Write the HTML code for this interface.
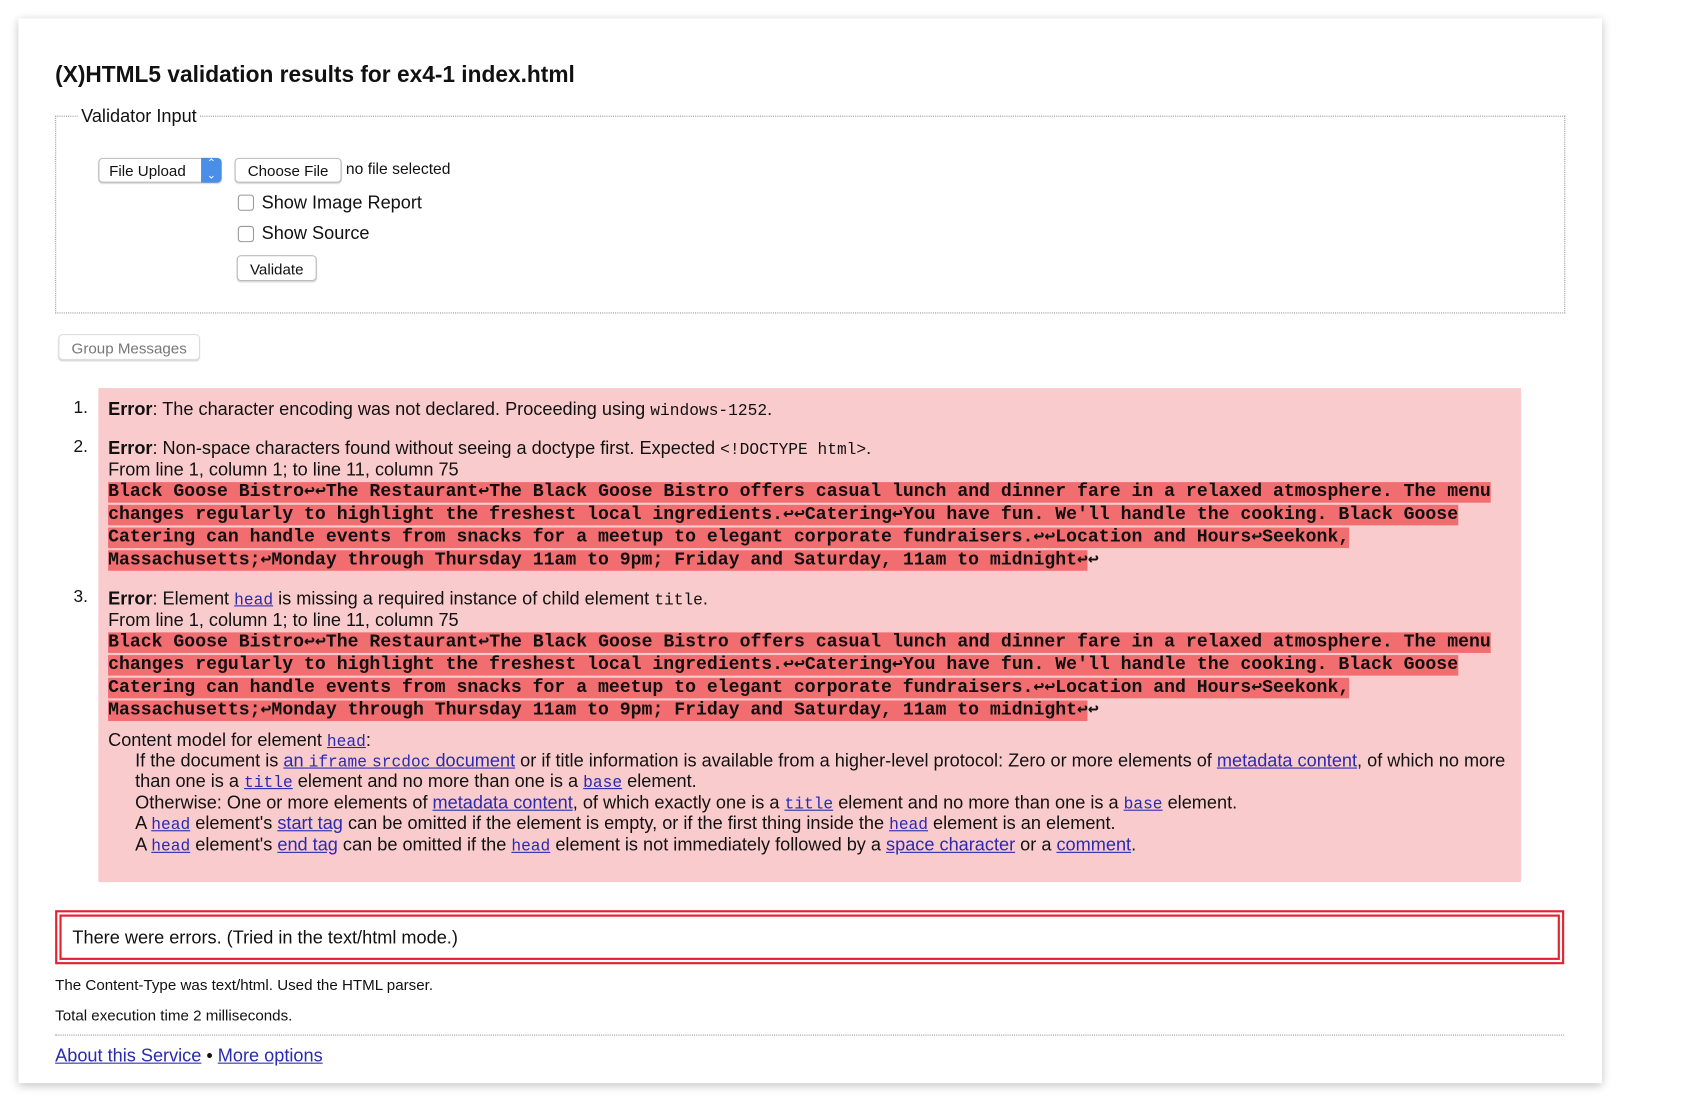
<!DOCTYPE html>
<html><head><meta charset="utf-8"><style>
html,body{margin:0;padding:0;background:#fff;width:1695px;height:1111px;overflow:hidden}
#s{position:absolute;left:0;top:0;width:1568px;height:1028px;transform:scale(1.081);transform-origin:0 0;font-family:"Liberation Sans",sans-serif;color:#111}
.card{position:absolute;left:17px;top:17px;width:1465px;height:985px;background:#fff;box-shadow:0 2px 8px rgba(0,0,0,.25)}
.a{position:absolute;white-space:nowrap}
h1{position:absolute;left:51px;top:58px;margin:0;font-size:21px;font-weight:bold}
.fs{position:absolute;left:51px;top:107px;width:1395px;height:181px;border:1px dotted #999}
.btn{position:absolute;border:1px solid #bbb;border-radius:4px;background:#fff;font-size:14px;box-sizing:border-box;text-align:center;box-shadow:0 1px 1px rgba(0,0,0,.15)}
.cb{position:absolute;width:13px;height:13px;border:1px solid #999;border-radius:3px;background:#fff}
.err{position:absolute;left:91px;top:359px;width:1316px;height:457px;background:#f9cbcd}
.t{font-size:16.8px}
.m{font-family:"Liberation Mono","DejaVu Sans Mono",monospace}
.code{position:absolute;left:100px;font-family:"Liberation Mono","DejaVu Sans Mono",monospace;font-weight:bold;font-size:16.8px;line-height:21px;white-space:nowrap;letter-spacing:0}
.code span{background:#f26d70;padding:0}
a{color:#2a2ab0;text-decoration:underline}
.num{position:absolute;left:68px;font-size:16px}
</style></head><body><div id="s">
<div class="card"></div>
<h1>(X)HTML5 validation results for ex4-1 index.html</h1>
<div class="fs"></div>
<div class="a t" style="left:72px;top:98px;background:#fff;padding:0 3px">Validator Input</div>
<div class="btn" style="left:91px;top:146px;width:114px;height:23px;text-align:left;padding:3px 0 0 9px">File Upload<span style="position:absolute;right:-1px;top:-1px;width:19px;height:23px;background:#4a8ee8;border-radius:0 4px 4px 0;color:#fff;font-size:10px;line-height:11px;text-align:center">⌃<br>⌄</span></div>
<div class="btn" style="left:217px;top:146px;width:99px;height:23px;padding-top:3px">Choose File</div>
<div class="a" style="left:320px;top:149px;font-size:14.5px">no file selected</div>
<div class="cb" style="left:220px;top:180px"></div><div class="a t" style="left:242px;top:178px">Show Image Report</div>
<div class="cb" style="left:220px;top:209px"></div><div class="a t" style="left:242px;top:206px">Show Source</div>
<div class="btn" style="left:219px;top:236px;width:74px;height:24px;padding-top:4px">Validate</div>
<div class="btn" style="left:54px;top:309px;width:131px;height:24px;padding-top:4px;color:#777;border-color:#ddd">Group Messages</div>
<div class="err"></div>
<div class="num" style="top:369px">1.</div>
<div class="a t" style="left:100px;top:369px"><b>Error</b>: The character encoding was not declared. Proceeding using <span class="m" style="font-size:15px">windows-1252</span>.</div>
<div class="num" style="top:405px">2.</div>
<div class="a t" style="left:100px;top:405px"><b>Error</b>: Non-space characters found without seeing a doctype first. Expected <span class="m" style="font-size:15px">&lt;!DOCTYPE html&gt;</span>.</div>
<div class="a t" style="left:100px;top:425px">From line 1, column 1; to line 11, column 75</div>
<div class="code" style="top:445px"><span>Black Goose Bistro↩↩The Restaurant↩The Black Goose Bistro offers casual lunch and dinner fare in a relaxed atmosphere. The menu</span><br><span>changes regularly to highlight the freshest local ingredients.↩↩Catering↩You have fun. We'll handle the cooking. Black Goose</span><br><span>Catering can handle events from snacks for a meetup to elegant corporate fundraisers.↩↩Location and Hours↩Seekonk,</span><br><span>Massachusetts;↩Monday through Thursday 11am to 9pm; Friday and Saturday, 11am to midnight↩</span>↩</div>
<div class="num" style="top:544px">3.</div>
<div class="a t" style="left:100px;top:544px"><b>Error</b>: Element <a class="m" style="font-size:15px">head</a> is missing a required instance of child element <span class="m" style="font-size:15px">title</span>.</div>
<div class="a t" style="left:100px;top:564px">From line 1, column 1; to line 11, column 75</div>
<div class="code" style="top:584px"><span>Black Goose Bistro↩↩The Restaurant↩The Black Goose Bistro offers casual lunch and dinner fare in a relaxed atmosphere. The menu</span><br><span>changes regularly to highlight the freshest local ingredients.↩↩Catering↩You have fun. We'll handle the cooking. Black Goose</span><br><span>Catering can handle events from snacks for a meetup to elegant corporate fundraisers.↩↩Location and Hours↩Seekonk,</span><br><span>Massachusetts;↩Monday through Thursday 11am to 9pm; Friday and Saturday, 11am to midnight↩</span>↩</div>
<div class="a t" style="left:100px;top:675px">Content model for element <a class="m" style="font-size:15px">head</a>:</div>
<div class="a t" style="left:125px;top:694px">If the document is <a>an <span class="m" style="font-size:15px">iframe</span> <span class="m" style="font-size:15px">srcdoc</span> document</a> or if title information is available from a higher-level protocol: Zero or more elements of <a>metadata content</a>, of which no more</div>
<div class="a t" style="left:125px;top:713px">than one is a <a class="m" style="font-size:15px">title</a> element and no more than one is a <a class="m" style="font-size:15px">base</a> element.</div>
<div class="a t" style="left:125px;top:733px">Otherwise: One or more elements of <a>metadata content</a>, of which exactly one is a <a class="m" style="font-size:15px">title</a> element and no more than one is a <a class="m" style="font-size:15px">base</a> element.</div>
<div class="a t" style="left:125px;top:752px">A <a class="m" style="font-size:15px">head</a> element's <a>start tag</a> can be omitted if the element is empty, or if the first thing inside the <a class="m" style="font-size:15px">head</a> element is an element.</div>
<div class="a t" style="left:125px;top:772px">A <a class="m" style="font-size:15px">head</a> element's <a>end tag</a> can be omitted if the <a class="m" style="font-size:15px">head</a> element is not immediately followed by a <a>space character</a> or a <a>comment</a>.</div>
<div style="position:absolute;left:51px;top:842px;width:1396px;height:50px;box-sizing:border-box;border:2px solid #e3232f;padding:2px"><div style="border:2px solid #e3232f;height:100%;box-sizing:border-box"></div></div>
<div class="a t" style="left:67px;top:858px">There were errors. (Tried in the text/html mode.)</div>
<div class="a" style="left:51px;top:903px;font-size:14px">The Content-Type was text/html. Used the HTML parser.</div>
<div class="a" style="left:51px;top:931px;font-size:14px">Total execution time 2 milliseconds.</div>
<div style="position:absolute;left:51px;top:957px;width:1396px;border-top:1px dotted #999"></div>
<div class="a t" style="left:51px;top:967px"><a>About this Service</a> • <a>More options</a></div>
</div></body></html>
